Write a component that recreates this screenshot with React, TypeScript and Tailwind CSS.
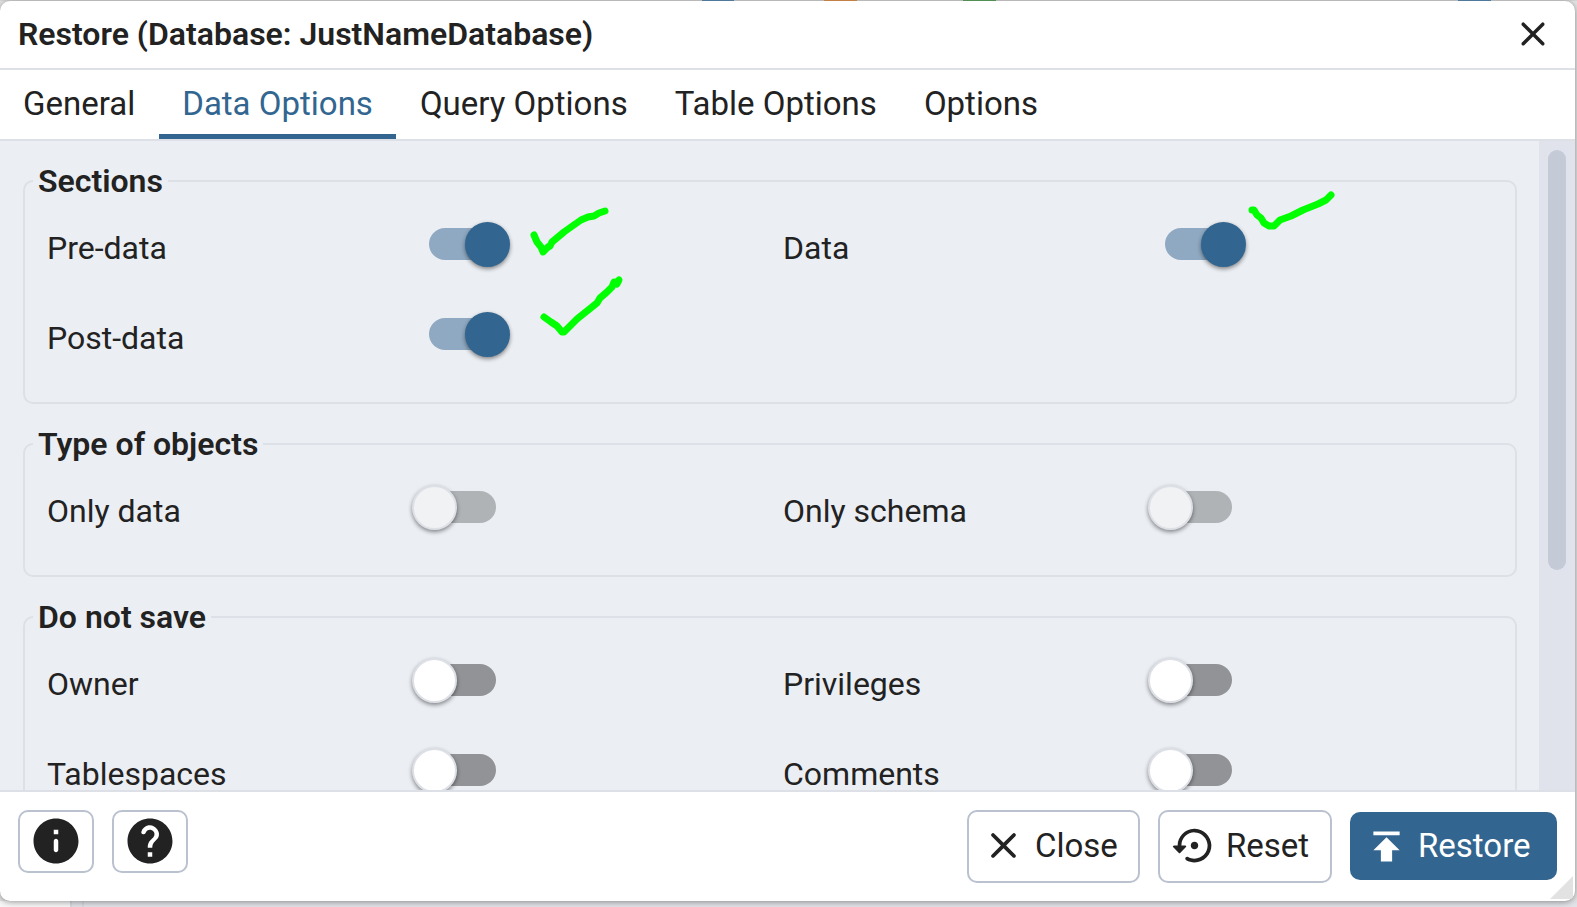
import React from "react";
import { MdPublish } from "react-icons/md";

type IconProps = { className?: string };

function CloseIcon({ className }: IconProps) {
  return (
    <svg viewBox="0 0 24 24" className={className} fill="currentColor" aria-hidden="true">
      <path d="M18.3 5.71a.9959.9959 0 0 0-1.41 0L12 10.59 7.11 5.7a.9959.9959 0 0 0-1.41 0c-.39.39-.39 1.02 0 1.41L10.59 12 5.7 16.89c-.39.39-.39 1.02 0 1.41.39.39 1.02.39 1.41 0L12 13.41l4.89 4.89c.39.39 1.02.39 1.41 0 .39-.39.39-1.02 0-1.41L13.41 12l4.89-4.89c.38-.38.38-1.02 0-1.4z" />
    </svg>
  );
}

function InfoIcon({ className }: IconProps) {
  return (
    <svg viewBox="0 0 24 24" className={className} fill="currentColor" aria-hidden="true">
      <path d="M12 2C6.48 2 2 6.48 2 12s4.48 10 10 10 10-4.48 10-10S17.52 2 12 2zm0 15c-.55 0-1-.45-1-1v-4c0-.55.45-1 1-1s1 .45 1 1v4c0 .55-.45 1-1 1zm1-8h-2V7h2v2z" />
    </svg>
  );
}

function HelpIcon({ className }: IconProps) {
  return (
    <svg viewBox="0 0 24 24" className={className} fill="currentColor" aria-hidden="true">
      <path d="M12 2C6.48 2 2 6.48 2 12s4.48 10 10 10 10-4.48 10-10S17.52 2 12 2zm1 17h-2v-2h2v2zm2.07-7.75l-.9.92c-.5.51-.86.97-1.04 1.69-.08.32-.13.68-.13 1.14h-2v-.5c0-.46.08-.9.22-1.31.2-.58.53-1.1.95-1.52l1.24-1.26c.46-.44.68-1.1.55-1.8-.13-.72-.69-1.33-1.39-1.53-1.11-.31-2.14.32-2.47 1.27-.12.37-.43.65-.82.65h-.3C8.4 9 8 8.44 8.16 7.88c.43-1.47 1.68-2.59 3.23-2.83 1.52-.24 2.97.55 3.87 1.8 1.18 1.63.83 3.38-.19 4.4z" />
    </svg>
  );
}

function ResetIcon({ className }: IconProps) {
  return (
    <svg viewBox="0 0 24 24" className={className} fill="currentColor" aria-hidden="true">
      <path d="M14 12c0-1.1-.9-2-2-2s-2 .9-2 2 .9 2 2 2 2-.9 2-2zm-2.26-8.99C6.9 3.14 3 7.19 3 12H1.210c-.45 0-.97.54-.65.85l3.090 3.1c.2.2.51.2.71 0l3.090-3.1c.31-.31.09-.85-.36-.85H5c0-3.9 3.18-7.05 7.100-7 3.720.050 6.850 3.180 6.900 6.900.050 3.910-3.100 7.100-7 7.100-1.250 0-2.420-.34-3.440-.91-.39-.22-.87-.14-1.180.18-.46.46-.37 1.250.2 1.570C8.890 20.560 10.400 21 12 21c5.050 0 9.140-4.170 9-9.260-.13-4.690-4.050-8.600-8.740-8.730z" />
    </svg>
  );
}

type ToggleSpec = {
  id: string;
  label: string;
  checked?: boolean;
  disabled?: boolean;
  mark?: string;
};

function Toggle({ id, label, checked, disabled, mark }: ToggleSpec) {
  return (
    <div className="flex h-[90px] items-start">
      <label htmlFor={id} className="w-[364px] shrink-0 pt-[6px] leading-[40px]">
        {label}
      </label>
      <span className="relative h-[45px] w-[100px] shrink-0 pt-[6px]">
        <input
          id={id}
          type="checkbox"
          role="switch"
          defaultChecked={checked}
          disabled={disabled}
          className="peer ml-[18px] block h-8 w-[67px] appearance-none rounded-full bg-[#929396] checked:bg-[#8fa9c2] disabled:bg-[#b0b3b6]"
        />
        <span className="pointer-events-none absolute top-0 left-px size-[45px] rounded-full border-2 border-[#dde0e6] bg-white shadow-[0_2px_4px_rgba(0,0,0,0.45)] peer-checked:left-[54px] peer-checked:border-[#326690] peer-checked:bg-[#326690] peer-disabled:bg-[#f1f2f4]" />
        {mark && (
          <svg
            viewBox="0 0 130 100"
            className="pointer-events-none absolute -top-10 left-[90px] h-[100px] w-[130px]"
            fill="none"
            stroke="#00ff00"
            strokeWidth="7"
            strokeLinecap="round"
            strokeLinejoin="round"
            aria-hidden="true"
          >
            <path d={mark} />
          </svg>
        )}
      </span>
    </div>
  );
}

type GroupSpec = { title: string; items: ToggleSpec[] };

const groups: GroupSpec[] = [
  {
    title: "Sections",
    items: [
      { id: "pre-data", label: "Pre-data", checked: true, mark: "M33 53L36 60L40 65L42 70L47 65L49 64L51 60L63 50L70 45L80 38L87 35L93 34L98 31L104 29" },
      { id: "data", label: "Data", checked: true, mark: "M15 28H17L20 33L24 36L27 41L32 44H37L43 38L54 34L66 28L81 22L89 18L94 13" },
      { id: "post-data", label: "Post-data", checked: true, mark: "M43 45L50 50L56 54L61 60H63L76 47L86 39L96 31L99 26L106 20L111 15L113 10H116L118 8L116 12" },
    ],
  },
  {
    title: "Type of objects",
    items: [
      { id: "only-data", label: "Only data", disabled: true },
      { id: "only-schema", label: "Only schema", disabled: true },
    ],
  },
  {
    title: "Do not save",
    items: [
      { id: "owner", label: "Owner" },
      { id: "privileges", label: "Privileges" },
      { id: "tablespaces", label: "Tablespaces" },
      { id: "comments", label: "Comments" },
    ],
  },
];

const tabs = ["General", "Data Options", "Query Options", "Table Options", "Options"];

export default function App() {
  return (
    <div className="flex h-screen flex-col overflow-hidden bg-[#e4e4e5] font-[Roboto,sans-serif] text-[32px] text-[#222222]">
      <div className="flex h-px shrink-0 bg-[#d5d5d5]">
        <i className="ml-[702px] w-8 bg-[#5b8db5]" />
        <i className="ml-[90px] w-[33px] bg-[#e0944f]" />
        <i className="ml-[106px] w-[33px] bg-[#5fa55f]" />
        <i className="ml-[462px] w-[33px] bg-[#5b8db5]" />
      </div>
      <main className="relative mr-[2px] flex min-h-0 flex-1 flex-col overflow-hidden rounded-[10px] bg-white shadow-[0_1px_6px_rgba(0,0,0,0.4)]">
        <header className="flex h-[69px] shrink-0 items-center justify-between border-b-2 border-[#dde0e6] pr-[21px] pb-[2px] pl-[18px]">
          <h1 className="font-semibold">Restore (Database: JustNameDatabase)</h1>
          <button type="button" aria-label="Close dialog">
            <CloseIcon className="size-[42px]" />
          </button>
        </header>
        <nav role="tablist" className="flex h-[71px] shrink-0 gap-px border-b-2 border-[#dde0e6] text-[33px]">
          {tabs.map((tab, i) => (
            <button
              key={tab}
              type="button"
              role="tab"
              aria-selected={i === 1}
              className="border-b-[5px] border-transparent px-[23px] pt-[3px] aria-selected:border-[#326690] aria-selected:text-[#326690]"
            >
              {tab}
            </button>
          ))}
        </nav>
        <div className="flex min-h-0 flex-1 bg-[#ebeef3]">
          <div className="min-w-0 flex-1 overflow-hidden pt-[15px] pr-[22px] pl-[23px]">
            {groups.map((group) => (
              <fieldset key={group.title} className="mb-[15px] rounded-[10px] border-2 border-[#dde0e6] pl-[22px]">
                <legend className="-ml-[14px] px-[5px] leading-[50px] font-semibold">{group.title}</legend>
                <div className="grid grid-cols-2 gap-x-1 pt-4">
                  {group.items.map((item) => (
                    <Toggle key={item.id} {...item} />
                  ))}
                </div>
              </fieldset>
            ))}
          </div>
          <div className="w-9 bg-[#e0e3eb] px-[9px] py-[9px]">
            <div className="h-[420px] rounded-full bg-[#c4cad6]" />
          </div>
        </div>
        <footer className="flex h-[111px] shrink-0 items-start justify-between border-t-2 border-[#dde0e6] px-[18px] pt-[18px]">
          <div className="flex gap-[18px]">
            <button type="button" aria-label="Info" className="flex h-[63px] w-[76px] items-center justify-center rounded-[10px] border-2 border-[#bac1cf] pb-[2px]">
              <InfoIcon className="size-[54px]" />
            </button>
            <button type="button" aria-label="Help" className="flex h-[63px] w-[76px] items-center justify-center rounded-[10px] border-2 border-[#bac1cf] pb-[2px]">
              <HelpIcon className="size-[54px]" />
            </button>
          </div>
          <div className="flex items-start gap-[18px] text-[33px]">
            <button type="button" className="flex h-[73px] w-[173px] items-center gap-[9px] rounded-[10px] border-2 border-[#bac1cf] pb-[2px] pl-3">
              <CloseIcon className="size-[45px]" />
              Close
            </button>
            <button type="button" className="flex h-[73px] w-[174px] items-center gap-[9px] rounded-[10px] border-2 border-[#bac1cf] pb-[2px] pl-3">
              <ResetIcon className="size-[45px]" />
              Reset
            </button>
            <button type="button" className="mt-[2px] flex h-[68px] w-[207px] items-center gap-[9px] rounded-[10px] bg-[#326690] pl-[14px] text-white">
              <MdPublish className="size-[45px]" />
              Restore
            </button>
          </div>
        </footer>
        <svg viewBox="0 0 22 22" className="absolute right-[2px] bottom-[2px] size-[23px]" aria-hidden="true">
          <path d="M22 0V22H0z" fill="#e2e2e2" />
        </svg>
      </main>
      <div className="flex h-[6px] shrink-0 bg-[#e1e3e8]">
        <div className="w-[70px] bg-[#f7f7f7]" />
        <div className="w-[14px] border-x-2 border-[#d6d9df]" />
      </div>
    </div>
  );
}
